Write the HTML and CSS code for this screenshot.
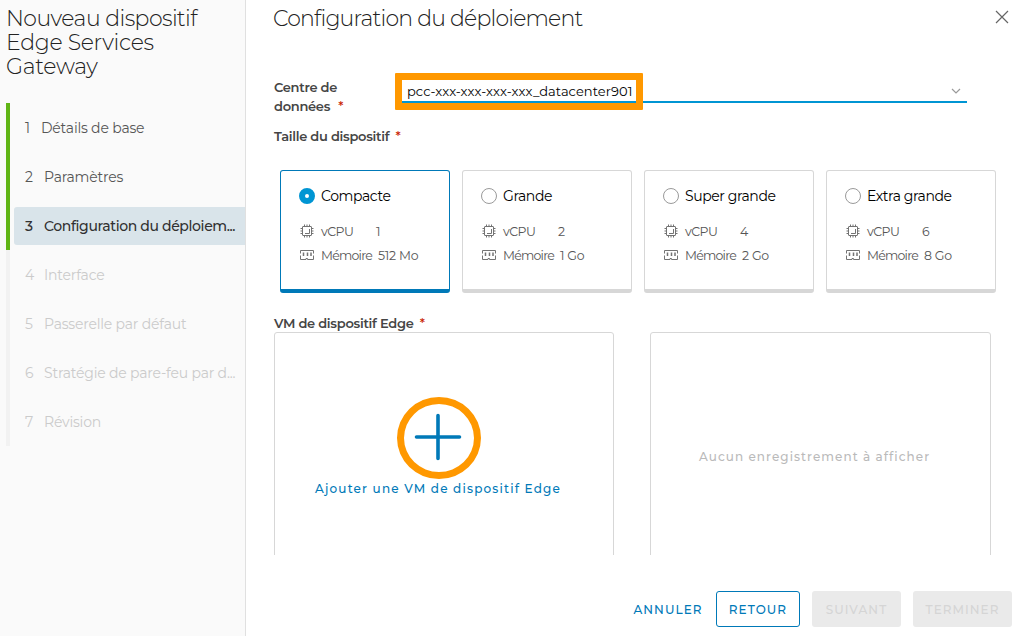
FILE: index.html
```html
<!DOCTYPE html>
<html lang="fr">
<head>
<meta charset="utf-8">
<title>Nouveau dispositif Edge Services Gateway</title>
<link rel="stylesheet" href="styles.css">
</head>
<body>
<svg class="defs" width="0" height="0" aria-hidden="true">
  <symbol id="cpu" viewBox="0 0 14 14">
    <rect x="2.5" y="2.5" width="9" height="9" rx=".5"/>
    <path d="M9.500 5v4.500h-4.500M4.500 .5v2M7 .5v2M9.500 .5v2M4.500 11.500v2M7 11.500v2M9.500 11.500v2M.5 4.500h2M.5 7h2M.5 9.500h2M11.500 4.500h2M11.500 7h2M11.500 9.500h2"/>
  </symbol>
  <symbol id="mem" viewBox="0 0 14 10">
    <path d="M.5 3.500V.5h13V3.500M.5 5.500v4h5.500V8.500h1.500v1h6V5.500"/>
    <path class="chips" d="M3.500 2.500v3.500M7.500 2.500v3.500M11 2.500v3.500"/>
  </symbol>
</svg>
<div class="wizard">
  <aside class="sidebar">
    <h1 class="title"><span class="t1">Nouveau dispositif</span><span class="t2">Edge Services</span><span class="t3">Gateway</span></h1>
    <ol class="steps">
      <li class="step done first"><span class="row"><span class="num">1</span><span class="name">Détails de base</span></span></li>
      <li class="step done"><span class="row"><span class="num">2</span><span class="name">Paramètres</span></span></li>
      <li class="step done active"><span class="row"><span class="num">3</span><span class="name">Configuration du déploiem...</span></span></li>
      <li class="step"><span class="row"><span class="num">4</span><span class="name">Interface</span></span></li>
      <li class="step"><span class="row"><span class="num">5</span><span class="name">Passerelle par défaut</span></span></li>
      <li class="step"><span class="row"><span class="num">6</span><span class="name">Stratégie de pare-feu par d...</span></span></li>
      <li class="step"><span class="row"><span class="num">7</span><span class="name">Révision</span></span></li>
    </ol>
  </aside>
  <main class="main">
    <header class="header">
      <h2 class="heading">Configuration du déploiement</h2>
      <svg class="close" viewBox="0 0 14 14"><path d="M1 1l12 12M13 1L1 13"/></svg>
    </header>
    <section class="body">
      <div class="field">
        <label class="label dc">Centre de<br>données <span class="req">*</span></label>
        <div class="select"><span class="value">pcc-xxx-xxx-xxx-xxx_datacenter901</span>
          <svg class="chevron" viewBox="0 0 10 6"><path d="M1 1l4 4 4-4"/></svg>
          <span class="mark"></span>
        </div>
      </div>
      <div class="label size">Taille du dispositif <span class="req">*</span></div>
      <div class="cards">
        <div class="card selected">
          <div class="option"><span class="radio"></span><span>Compacte</span></div>
          <div class="spec"><svg class="icon"><use href="#cpu"/></svg><span class="key cpu">vCPU</span><span>1</span></div>
          <div class="spec"><svg class="icon ram"><use href="#mem"/></svg><span class="key">Mémoire</span><span>512 Mo</span></div>
        </div>
        <div class="card">
          <div class="option"><span class="radio"></span><span>Grande</span></div>
          <div class="spec"><svg class="icon"><use href="#cpu"/></svg><span class="key cpu">vCPU</span><span>2</span></div>
          <div class="spec"><svg class="icon ram"><use href="#mem"/></svg><span class="key">Mémoire</span><span>1 Go</span></div>
        </div>
        <div class="card">
          <div class="option"><span class="radio"></span><span>Super grande</span></div>
          <div class="spec"><svg class="icon"><use href="#cpu"/></svg><span class="key cpu">vCPU</span><span>4</span></div>
          <div class="spec"><svg class="icon ram"><use href="#mem"/></svg><span class="key">Mémoire</span><span>2 Go</span></div>
        </div>
        <div class="card">
          <div class="option"><span class="radio"></span><span>Extra grande</span></div>
          <div class="spec"><svg class="icon"><use href="#cpu"/></svg><span class="key cpu">vCPU</span><span>6</span></div>
          <div class="spec"><svg class="icon ram"><use href="#mem"/></svg><span class="key">Mémoire</span><span>8 Go</span></div>
        </div>
      </div>
      <div class="label vm">VM de dispositif Edge <span class="req">*</span></div>
      <div class="panels">
        <div class="panel add">
          <span class="ring"><svg class="plus" viewBox="0 0 48 48"><path d="M24 2.500v43M2.500 24h43"/></svg></span>
          <span class="add-text">Ajouter une VM de dispositif Edge</span>
        </div>
        <div class="panel empty"><span>Aucun enregistrement à afficher</span></div>
      </div>
    </section>
    <footer class="footer">
      <button class="btn link">ANNULER</button>
      <button class="btn outline">RETOUR</button>
      <button class="btn off next">SUIVANT</button>
      <button class="btn off finish">TERMINER</button>
    </footer>
  </main>
</div>
</body>
</html>
```
FILE: styles.css
```css
* { box-sizing: border-box; }
body { margin: 0; background: #fff; font-family: Metropolis, Montserrat, Inter, "Open Sans", sans-serif; font-size: 14px; color: #565656; overflow: hidden; }
.defs { position: absolute; }
.wizard { display: flex; width: 1018px; height: 636px; }
.sidebar { width: 246px; flex: none; background: #fafafa; border-right: 1px solid #e0e0e0; padding-top: 7px; }
.title, .heading { margin: 0; font-size: 22px; line-height: 24px; font-weight: 300; color: #222; white-space: nowrap; }
.title { display: flex; flex-direction: column; padding-left: 6px; }
.heading { letter-spacing: -.8px; }
.t1 { letter-spacing: -.55px; }
.t2, .t3 { letter-spacing: -.3px; }
.steps { list-style: none; margin: 24px 0 0; padding: 0 0 0 6px; letter-spacing: -.2px; }
.step { height: 49px; border-left: 4px solid #f2f2f2; padding: 6px 0 5px 4px; color: #cbcbcb; }
.step.done { border-color: #60b515; color: #565656; }
.row { display: flex; align-items: center; height: 38px; padding-left: 11px; border-radius: 3px 0 0 3px; white-space: nowrap; }
.num { width: 19px; }
.first .num { width: 16px; }
.step.active .row { background: #d9e4ea; color: #313131; font-weight: 500; letter-spacing: -.37px; }
.main { flex: 1; display: flex; flex-direction: column; }
.header { display: flex; justify-content: space-between; align-items: flex-start; height: 72px; padding: 7px 9px 0 27px; }
.close { width: 14px; height: 14px; margin-top: 3px; fill: none; stroke: #666; stroke-width: 1.2; }
.body { height: 483px; padding-left: 28px; overflow: hidden; }
.field { display: flex; height: 55px; }
.label { font-size: 13px; line-height: 19px; font-weight: 600; letter-spacing: -.28px; color: #454545; white-space: nowrap; }
.dc { width: 127px; padding-top: 6px; }
.req { color: #c92100; margin-left: 3px; font-weight: 500; }
.dc .req { margin-left: 5px; }
.select { position: relative; display: flex; align-items: center; justify-content: space-between; width: 566px; height: 25px; margin-top: 6px; padding: 2px 6px 0; border-bottom: 2px solid #0095d3; color: #000; font-size: 13px; letter-spacing: .06px; }
.chevron { width: 10px; height: 6px; fill: none; stroke: #9a9a9a; stroke-width: 1.2; }
.mark { position: absolute; left: -6px; top: -5px; width: 248px; height: 37px; border: 7px solid #ff9800; border-radius: 1px; clip-path: polygon(0 0, 100% 0, 100% 100%, 0 100%); }
.size { height: 43px; }
.cards { display: flex; gap: 12px; padding-left: 6px; height: 123px; }
.card { width: 170px; border: 1px solid #d7d7d7; border-bottom-width: 4px; border-radius: 3px; padding: 15px 0 0 18px; }
.selected { border-color: #0079b8; }
.option { display: flex; align-items: center; gap: 6px; height: 20px; margin-bottom: 13px; color: #000; letter-spacing: -.42px; white-space: nowrap; }
.radio { width: 16px; height: 16px; border: 1px solid #9a9a9a; border-radius: 50%; }
.selected .radio { border: 6px solid #0095d3; }
.spec { display: flex; align-items: center; height: 24px; font-size: 12.5px; letter-spacing: -.25px; white-space: nowrap; }
.icon { width: 14px; height: 14px; margin: 0 7px 0 1px; fill: none; stroke: #737373; stroke-width: 1; }
.ram { height: 10px; }
.chips { stroke-width: 1.500; }
.key { width: 57px; letter-spacing: -.75px; }
.cpu { width: 55px; letter-spacing: -.5px; }
.vm { padding-top: 21px; height: 39px; }
.panels { display: flex; gap: 36px; }
.panel { width: 340px; height: 250px; border: 1px solid #d7d7d7; border-radius: 3px; font-size: 12px; font-weight: 500; white-space: nowrap; }
.add { display: flex; flex-direction: column; align-items: center; padding-top: 64px; color: #0079b8; }
.ring { display: flex; align-items: center; justify-content: center; width: 84px; height: 82px; margin-left: -10px; border: 7px solid #ff9800; border-radius: 50%; }
.plus { width: 48px; height: 48px; flex: none; margin: -2px 2px 0 0; stroke: #0079b8; stroke-width: 3.600; stroke-linecap: round; }
.add-text { margin-top: 1px; line-height: 18px; letter-spacing: 1.180px; margin-left: -12px; }
.empty { width: 341px; padding-top: 115px; padding-left: 48px; line-height: 18px; color: #bababa; letter-spacing: 1.050px; }
.footer { display: flex; justify-content: flex-end; height: 81px; padding: 36px 6px 0 0; }
.btn { height: 36px; padding: 0; border: 1px solid transparent; border-radius: 3px; background: none; font: 500 12px Metropolis, Montserrat, Inter, sans-serif; letter-spacing: 1.050px; color: #0079b8; }
.link { width: 84px; margin-right: 6px; }
.outline { width: 84px; border-color: #0079b8; margin-right: 12px; }
.off { background: #eaeaea; color: #d5d5d5; }
.next { width: 89px; margin-right: 12px; }
.finish { width: 99px; }
```
